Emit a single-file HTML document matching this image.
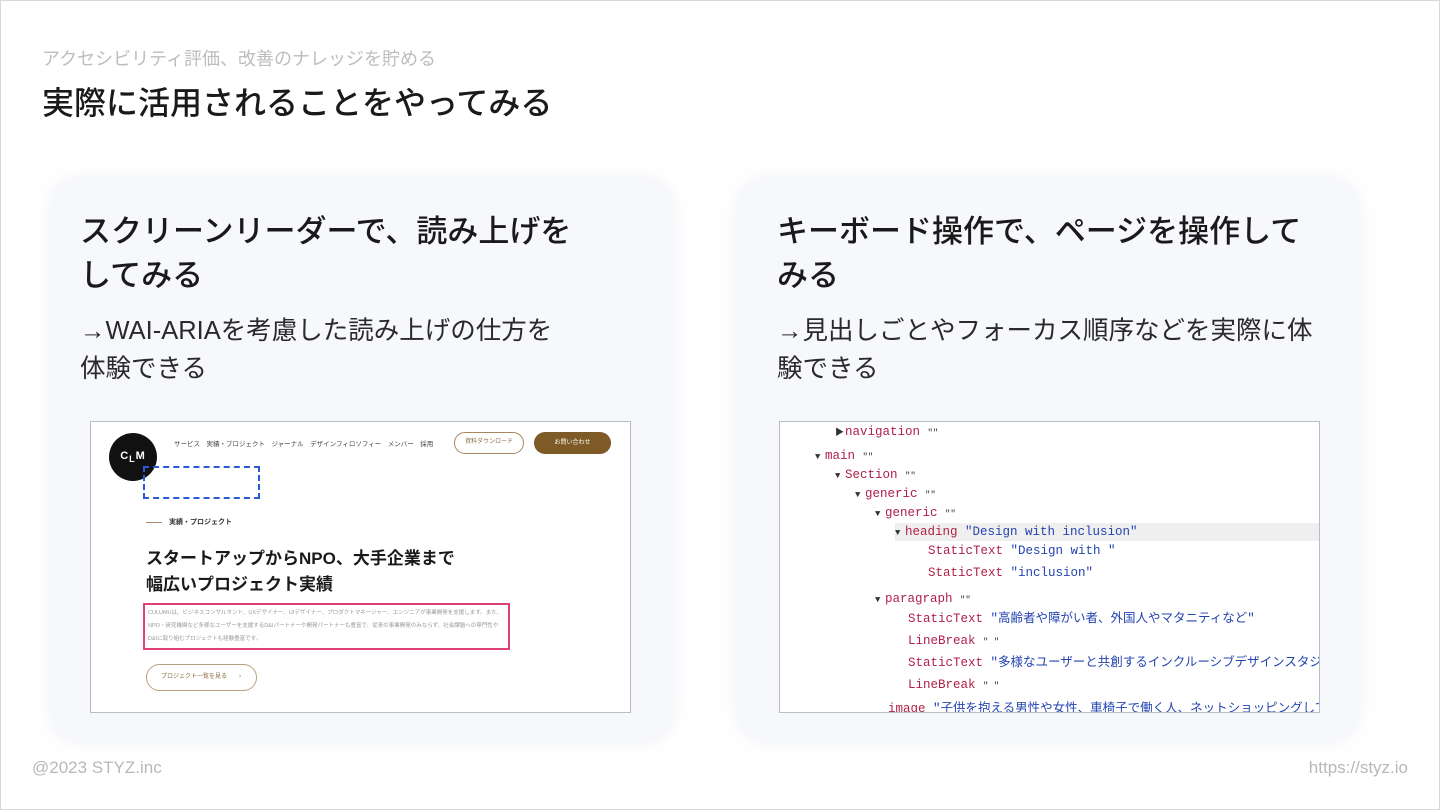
<!DOCTYPE html>
<html><head><meta charset="utf-8"><style>
*{margin:0;padding:0;box-sizing:border-box}
body{width:1440px;height:810px;background:#fff;position:relative;overflow:hidden;font-family:"Liberation Sans","Noto Sans CJK JP",sans-serif;color:#1a1a1a}
.frame{position:absolute;inset:0;border:1px solid #d8d8d8}
.a{position:absolute;white-space:nowrap}
.card{position:absolute;top:180px;width:620px;height:560px;background:#f7f8fc;border-radius:28px;box-shadow:0 0 18px rgba(200,205,225,.35)}
.h{font-size:31px;line-height:44px;font-weight:500;color:#1a1a1a}
.s{font-size:25.5px;line-height:38px;color:#2a2a2a}
.shot{position:absolute;top:421px;width:541px;height:292px;background:#fff;border:1px solid #b9bcc4;overflow:hidden}
.m{position:absolute;font-family:"Liberation Mono","Noto Sans CJK JP",monospace;font-size:12.5px;line-height:16px;white-space:nowrap;color:#b0204a}
.m b{font-weight:normal;color:#2444b0}
.m i{font-style:normal;color:#333;font-size:9px}
.m u{text-decoration:none;color:#333;font-size:9px;display:inline-block;width:10px}
</style></head><body>
<div class="frame"></div>
<div class="a" style="left:42px;top:45px;font-size:18px;color:#bdbdbd">アクセシビリティ評価、改善のナレッジを貯める</div>
<div class="a" style="left:42px;top:78px;font-size:32px;font-weight:500;color:#1a1a1a">実際に活用されることをやってみる</div>

<div class="card" style="left:52px"></div>
<div class="card" style="left:738px"></div>

<div class="a h" style="left:80px;top:210px">スクリーンリーダーで、読み上げを<br>してみる</div>
<div class="a s" style="left:80px;top:312px">→WAI-ARIAを考慮した読み上げの仕方を<br>体験できる</div>
<div class="a h" style="left:777px;top:210px">キーボード操作で、ページを操作して<br>みる</div>
<div class="a s" style="left:777px;top:312px">→見出しごとやフォーカス順序などを実際に体<br>験できる</div>

<div class="shot" style="left:90px">
 <div class="a" style="left:18px;top:11px;width:48px;height:48px;border-radius:50%;background:#111;color:#fff;font-size:11px;font-weight:bold;text-align:center;line-height:46px;letter-spacing:1px">C<sub style="font-size:9px">L</sub>M</div>
 <div class="a" style="left:83px;top:16px;font-size:6.5px;color:#444;word-spacing:8px">サービス　実績・プロジェクト　ジャーナル　デザインフィロソフィー　メンバー　採用</div>
 <div class="a" style="left:363px;top:10px;width:70px;height:22px;border:1.5px solid #a88660;border-radius:11px;font-size:6px;color:#8a6a40;text-align:center;line-height:19px">資料ダウンロード</div>
 <div class="a" style="left:443px;top:10px;width:77px;height:22px;background:#7d5a26;border-radius:11px;font-size:6px;color:#fff;text-align:center;line-height:22px">お問い合わせ</div>
 <div class="a" style="left:52px;top:44px;width:117px;height:33px;border:2px dashed #2a5ad8"></div>
 <div class="a" style="left:55px;top:100px;width:16px;height:1px;background:#b08a70"></div>
 <div class="a" style="left:78px;top:95px;font-size:7px;font-weight:bold;color:#333">実績・プロジェクト</div>
 <div class="a" style="left:55px;top:124px;font-size:17px;font-weight:bold;line-height:26px;color:#1a1a1a">スタートアップからNPO、大手企業まで<br>幅広いプロジェクト実績</div>
 <div class="a" style="left:52px;top:181px;width:367px;height:47px;border:2px solid #e0407a;font-size:5.5px;line-height:13px;color:#999;padding:2px 3px;white-space:normal">CULUMUは、ビジネスコンサルタント、UXデザイナー、UIデザイナー、プロダクトマネージャー、エンジニアが事業開発を支援します。また、NPO・研究機関など多様なユーザーを支援するD&amp;Iパートナーや開発パートナーも豊富で、従来の事業開発のみならず、社会課題への専門性やD&amp;Iに取り組むプロジェクトも経験豊富です。</div>
 <div class="a" style="left:55px;top:242px;width:111px;height:27px;border:1.5px solid #b8a080;border-radius:14px;font-size:6px;color:#8a6a40;line-height:24px;padding-left:14px">プロジェクト一覧を見る　　›</div>
</div>

<div class="shot" style="left:779px">
 <div class="m" style="left:55px;top:2px"><u>▶</u>navigation <i>""</i></div>
 <div class="m" style="left:35px;top:26px"><u>▼</u>main <i>""</i></div>
 <div class="m" style="left:55px;top:45px"><u>▼</u>Section <i>""</i></div>
 <div class="m" style="left:75px;top:64px"><u>▼</u>generic <i>""</i></div>
 <div class="m" style="left:95px;top:83px"><u>▼</u>generic <i>""</i></div>
 <div class="a" style="left:115px;top:101px;width:430px;height:18px;background:#efefef"></div>
 <div class="m" style="left:115px;top:102px"><u>▼</u>heading <b>"Design with inclusion"</b></div>
 <div class="m" style="left:148px;top:121px">StaticText <b>"Design with "</b></div>
 <div class="m" style="left:148px;top:143px">StaticText <b>"inclusion"</b></div>
 <div class="m" style="left:95px;top:169px"><u>▼</u>paragraph <i>""</i></div>
 <div class="m" style="left:128px;top:189px">StaticText <b>"高齢者や障がい者、外国人やマタニティなど"</b></div>
 <div class="m" style="left:128px;top:211px">LineBreak <i>" "</i></div>
 <div class="m" style="left:128px;top:233px">StaticText <b>"多様なユーザーと共創するインクルーシブデザインスタジオ</b></div>
 <div class="m" style="left:128px;top:255px">LineBreak <i>" "</i></div>
 <div class="m" style="left:108px;top:279px">image <b>"子供を抱える男性や女性、車椅子で働く人、ネットショッピングしている高</b></div>
</div>

<div class="a" style="left:32px;top:758px;font-size:17px;color:#b8b8b8">@2023 STYZ.inc</div>
<div class="a" style="right:32px;top:758px;font-size:17px;color:#b8b8b8">https://styz.io</div>
</body></html>
